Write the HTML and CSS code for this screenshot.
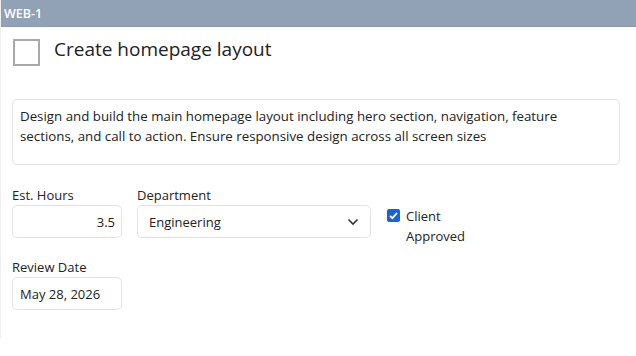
FILE: index.html
```html
<!DOCTYPE html>
<html lang="en">
<head>
    <meta charset="UTF-8">
    <meta name="viewport" content="width=device-width, initial-scale=1.0">
    <title>WEB-1</title>
    <link rel="stylesheet" href="styles.css">
</head>
<body>
    <div class="card">
        <header class="card-head">WEB-1</header>
        <div class="card-body">
            <div class="title-row">
                <span class="big-check"></span>
                <h1>Create homepage layout</h1>
            </div>

            <div class="desc">Design and build the main homepage layout including hero section, navigation, feature sections, and call to action. Ensure responsive design across all screen sizes</div>

            <div class="row">
                <div class="field">
                    <label>Est. Hours</label>
                    <div class="box box-num">3.5</div>
                </div>
                <div class="field">
                    <label>Department</label>
                    <div class="box box-select">
                        <span>Engineering</span>
                        <svg width="12" height="8" viewBox="0 0 12 8"><path d="M1.5 1.5 L6 6 L10.5 1.5" fill="none" stroke="#333" stroke-width="1.6"/></svg>
                    </div>
                </div>
                <div class="approved">
                    <span class="mini-check">
                        <svg width="13" height="13" viewBox="0 0 13 13"><path d="M3 6.8 L5.4 9.2 L10 4" fill="none" stroke="#fff" stroke-width="1.8"/></svg>
                    </span>
                    <span>Client<br>Approved</span>
                </div>
            </div>

            <div class="field">
                <label>Review Date</label>
                <div class="box box-date">May 28, 2026</div>
            </div>
        </div>
    </div>
</body>
</html>
```

FILE: styles.css
```css
body{
    margin: 0;
    background-color: #fff;
    font-family: "Open Sans", "Noto Sans", sans-serif;
    color: #222;
}

.card{
    height: 338px;
    overflow: hidden;
    border-left: 1px solid #eeeeee;
}

.card-head{
    height: 27px;
    background-color: #91a1b6;
    border-bottom: 1px solid #8a98aa;
    color: #fff;
    font-size: 12.5px;
    font-weight: 600;
    line-height: 27px;
    padding-left: 3px;
    box-sizing: border-box;
}

.card-body{
    padding: 9px 16px 0 11px;
}

.title-row{
    display: flex;
    align-items: center;
    gap: 14px;
    margin-left: 1px;
}

.big-check{
    width: 27px;
    height: 27px;
    border: 2px solid #a9a9a9;
    box-sizing: border-box;
}

h1{
    margin: 0 0 7px 0;
    font-size: 19px;
    font-weight: 400;
    color: #222;
}

.desc{
    margin-top: 30px;
    height: 66px;
    box-sizing: border-box;
    border: 1px solid #e3e3e3;
    border-radius: 5px;
    padding: 6px 7px;
    font-size: 13.3px;
    line-height: 20px;
}

.row{
    display: flex;
    gap: 15px;
    margin-top: 21px;
    margin-bottom: 6px;
}

.field{
    display: flex;
    flex-direction: column;
    margin-bottom: 14px;
}

label{
    font-size: 13px;
    line-height: 19px;
}

.box{
    height: 33px;
    box-sizing: border-box;
    border: 1px solid #e3e3e3;
    border-radius: 5px;
    font-size: 13px;
    display: flex;
    align-items: center;
    padding: 0 7px;
}

.box-num{
    width: 110px;
    justify-content: flex-end;
    padding-right: 6px;
}

.box-select{
    width: 234px;
    justify-content: space-between;
    padding: 0 11px 0 11px;
}

.box-date{
    width: 110px;
}

.approved{
    display: flex;
    align-items: flex-start;
    gap: 6px;
    font-size: 13px;
    line-height: 20px;
    margin-top: 20px;
    margin-left: 1px;
}

.mini-check{
    width: 13px;
    height: 13px;
    margin-top: 3px;
    border-radius: 2px;
    background-color: #1b62d4;
    display: flex;
}
```
